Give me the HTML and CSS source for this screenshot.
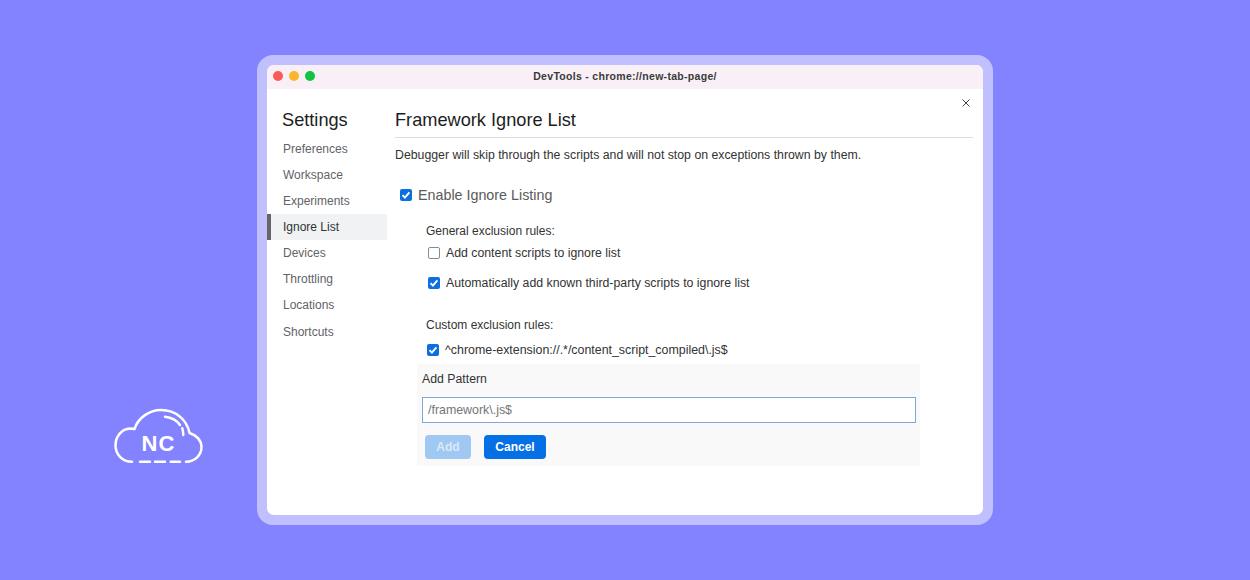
FILE: index.html
```html
<!DOCTYPE html>
<html lang="en">
<head>
<meta charset="utf-8">
<title>DevTools Ignore List</title>
<link rel="stylesheet" href="styles.css">
</head>
<body>
<svg class="logo" width="90" height="58" viewBox="0 0 90 58" fill="none" stroke="#fff" stroke-width="2.500" stroke-linecap="round" stroke-linejoin="round">
  <path d="M18 53.700C8 53.700 1.500 46 1.500 37.500C1.500 28 8 21 16 20.500C18 20.500 19.500 20.700 20.500 21C24 10 35 2 47 2C62 2 73 12 75.500 25C82 27 87.500 32 87.500 39C87.500 47 81 53.700 72 53.700"/>
  <path d="M26 53.700H36M41 53.700H51M56.700 53.700H66"/>
  <path d="M51 8.700C58 9.500 63 12.500 66 17M68.300 20.300C69 22.500 69.300 24.500 69.300 27"/>
  <text x="44.500" y="43" text-anchor="middle" class="logo-text">NC</text>
</svg>
<main class="frame">
  <div class="window">
    <header class="titlebar">
      <div class="lights">
        <span class="light red"></span>
        <span class="light yellow"></span>
        <span class="light green"></span>
      </div>
      <div class="title">DevTools - chrome://new-tab-page/</div>
    </header>
    <div class="body">
      <nav class="sidebar">
        <h2 class="settings">Settings</h2>
        <a class="nav">Preferences</a>
        <a class="nav">Workspace</a>
        <a class="nav">Experiments</a>
        <a class="nav active">Ignore List</a>
        <a class="nav">Devices</a>
        <a class="nav">Throttling</a>
        <a class="nav">Locations</a>
        <a class="nav">Shortcuts</a>
      </nav>
      <section class="content">
        <svg class="close" width="8" height="8" viewBox="0 0 8 8" stroke="#444" stroke-width="1"><path d="M.5.5l7 7M7.500.5l-7 7"/></svg>
        <h1 class="heading">Framework Ignore List</h1>
        <p class="desc">Debugger will skip through the scripts and will not stop on exceptions thrown by them.</p>
        <label class="check enable">
          <span class="box on"><svg width="12" height="12" viewBox="0 0 12 12" fill="none" stroke="#fff" stroke-width="1.900"><path d="M2.500 6.200l2.400 2.400 4.500-5.300"/></svg></span>
          Enable Ignore Listing
        </label>
        <div class="rules">
          <div class="rule-head">General exclusion rules:</div>
          <label class="check general">
            <span class="box"></span>
            Add content scripts to ignore list
          </label>
          <label class="check general second">
            <span class="box on"><svg width="12" height="12" viewBox="0 0 12 12" fill="none" stroke="#fff" stroke-width="1.900"><path d="M2.500 6.200l2.400 2.400 4.500-5.300"/></svg></span>
            Automatically add known third-party scripts to ignore list
          </label>
          <div class="rule-head custom">Custom exclusion rules:</div>
          <label class="check general pattern">
            <span class="box on"><svg width="12" height="12" viewBox="0 0 12 12" fill="none" stroke="#fff" stroke-width="1.900"><path d="M2.500 6.200l2.400 2.400 4.500-5.300"/></svg></span>
            ^chrome-extension://.*/content_script_compiled\.js$
          </label>
        </div>
        <form class="add-form">
          <div class="add-title">Add Pattern</div>
          <div class="input">/framework\.js$</div>
          <div class="buttons">
            <span class="btn disabled">Add</span>
            <span class="btn primary">Cancel</span>
          </div>
        </form>
      </section>
    </div>
  </div>
</main>
</body>
</html>
```
FILE: styles.css
```css
* { box-sizing: border-box; }
html, body { height: 100%; }
body {
  margin: 0;
  background: #8383ff;
  display: flex;
  align-items: center;
  justify-content: center;
  font-family: "Liberation Sans", Arial, sans-serif;
  overflow: hidden;
}
.logo { position: absolute; left: 114px; top: 408px; }
.logo-text {
  font-family: "Liberation Sans", Arial, sans-serif;
  font-weight: 700;
  font-size: 22px;
  fill: #fff;
  stroke: none;
  letter-spacing: 1px;
}
.frame {
  width: 736px;
  height: 470px;
  padding: 10px;
  background: #c0c0ff;
  border-radius: 16px;
}
.window {
  height: 100%;
  background: #fff;
  border-radius: 7px;
  overflow: hidden;
  display: flex;
  flex-direction: column;
}
.titlebar {
  height: 24px;
  flex: none;
  padding-bottom: 2px;
  background: #f8f0f6;
  position: relative;
  display: flex;
  align-items: center;
  justify-content: center;
}
.lights {
  position: absolute;
  left: 6px;
  top: 6px;
  display: flex;
  gap: 6px;
}
.light { width: 10px; height: 10px; border-radius: 50%; }
.red { background: #fb5b55; }
.yellow { background: #fdb42d; }
.green { background: #13c23e; }
.title {
  font-size: 10.500px;
  font-weight: 700;
  color: #3a3a3a;
  letter-spacing: .3px;
}
.body { flex: 1; display: flex; min-height: 0; }
.sidebar { width: 120px; flex: none; padding-top: 19px; }
.settings {
  margin: 0 0 3.600px 15px;
  font-size: 18.200px;
  line-height: 24px;
  font-weight: 400;
  color: #1d1d1d;
}
.nav {
  display: block;
  height: 26.150px;
  line-height: 26px;
  padding-left: 16px;
  font-size: 12px;
  color: #5f6368;
}
.active {
  background: #f0f2f3;
  color: #303336;
  border-left: 4px solid #666;
  padding-left: 12px;
}
.content { flex: 1; padding: 19px 10px 0 8px; position: relative; }
.close { position: absolute; right: 13px; top: 10px; }
.heading {
  margin: 0;
  height: 30px;
  font-size: 18.200px;
  line-height: 24px;
  font-weight: 400;
  color: #1d1d1d;
  border-bottom: 1px solid #dcdcdc;
}
.desc {
  margin: 9px 0 0;
  font-size: 12.300px;
  line-height: 16px;
  color: #333;
}
.check { display: flex; align-items: center; color: #333; }
.enable { margin: 22px 0 0 5px; height: 20px; font-size: 14.300px; color: #5a5a5a; gap: 6px; }
.box {
  width: 12px;
  height: 12px;
  flex: none;
  border: 1px solid #8a8a8a;
  border-radius: 2px;
  background: #fff;
  display: block;
}
.box svg { display: block; }
.box.on { background: #0b6fe0; border: 0; }
.rules { margin: 18px 0 0 31px; }
.rule-head { font-size: 12px; line-height: 16px; color: #333; }
.general { font-size: 12.300px; height: 16px; gap: 6px; margin: 6px 0 0 2px; }
.second { margin-top: 14px; }
.custom { margin-top: 26px; }
.pattern { margin: 9px 0 0 1px; font-size: 12.400px; }
.add-form {
  margin: 6px 0 0 22px;
  width: 503px;
  height: 102px;
  padding: 7px 5px 0;
  background: #f9f9f9;
}
.add-title { font-size: 12.300px; line-height: 16px; color: #333; }
.input {
  margin-top: 10px;
  width: 494px;
  height: 26px;
  border: 1.500px solid #7fa8d6;
  background: #fff;
  padding-left: 5px;
  font-size: 12.400px;
  line-height: 24px;
  color: #757575;
}
.buttons { display: flex; gap: 13px; margin-top: 12px; padding-left: 3px; }
.btn {
  height: 24px;
  border-radius: 4px;
  font-size: 12px;
  font-weight: 700;
  line-height: 24px;
  text-align: center;
  color: #fff;
}
.disabled { width: 46px; background: #9fc8f3; color: #dbe9f8; }
.primary { width: 62px; background: #0570e6; }
```
